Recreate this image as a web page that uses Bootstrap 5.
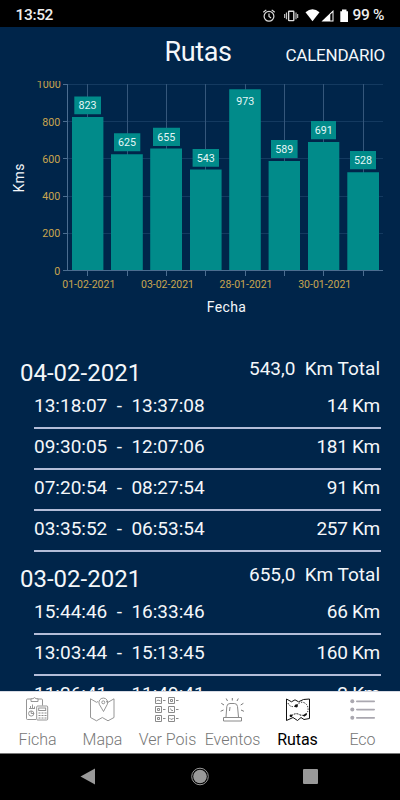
<!DOCTYPE html>
<html lang="es">
<head>
<meta charset="utf-8">
<meta name="viewport" content="width=device-width, initial-scale=1">
<title>Rutas</title>
<link href="https://cdn.jsdelivr.net/npm/bootstrap@5.3.0/dist/css/bootstrap.min.css" rel="stylesheet">
<style>
body { font-family: Roboto, "Liberation Sans", sans-serif; background: #00254a; color: #f4f7fa; }
svg { display: block; flex: none; }
.status { height: 27px; padding: 4px 16px 0 15.5px; font-size: 15.5px; font-weight: 500; letter-spacing: -.35px; background: #000; color: #eee; }
.titlebar { height: 54px; display: grid; grid-template-columns: 1fr auto 1fr; padding: 0 15px 0 11px; }
.titlebar h1 { font-size: 27px; font-weight: 400; line-height: 30px; margin-top: 10px; letter-spacing: -.4px; }
.cal { font-size: 17px; line-height: 22px; margin-top: 17px; letter-spacing: -.25px; }
.chart { height: 265px; }
.day-head { height: 42px; padding: 0 20px; }
.day-date { font-size: 24px; line-height: 28px; padding-top: 13px; }
.day-total { font-size: 19px; line-height: 22px; padding-top: 12px; white-space: pre; }
.trip { height: 41px; margin: 0 19px 0 34px; padding: 7px 1px 0 0; border-bottom: 2px solid #b3bdd8; font-size: 19px; line-height: 22px; white-space: pre; }
.trip span:last-child { letter-spacing: -.25px; }
.tabs { height: 63px; padding: 0 5px; background: #fff; border-top: 1px solid #d8dbe4; border-bottom: 1px solid #777; }
.tab { width: 65px; padding-top: 3px; font-size: 16px; font-weight: 300; line-height: 20px; color: #777; white-space: nowrap; }
.tab svg { margin: 0 1px 5px 0; }
.tab.current { color: #000; font-weight: 400; letter-spacing: -.1px; }
.sysnav { height: 46px; background: #000; }
</style>
<script src="https://cdn.jsdelivr.net/npm/bootstrap@5.3.0/dist/js/bootstrap.bundle.min.js"></script>
</head>
<body>
<div class="d-flex flex-column vh-100 overflow-hidden">
  <header class="flex-shrink-0">
    <div class="status d-flex justify-content-between align-items-center">
      <span>13:52</span>
      <div class="d-flex align-items-center">
        <svg width="90" height="20" viewBox="257 4 90 20" fill="none" stroke="#ddd" stroke-width="1.2">
          <circle cx="267" cy="14.3" r="4.9"/><path d="M267 11.4v3.1l2.1 1.400M261.3 10.3l3-2.4M272.7 10.3l-3-2.4"/>
          <rect x="286.6" y="9.3" width="5.2" height="9.3" rx=".5" stroke-width="1.4"/><path d="M284.4 10.5v6.8M294 10.5v6.8M282.7 12v4M295.700 12v4" stroke-width="1"/>
          <path d="M303.500 10.200Q310.500 4.500 317.500 10.200L310.500 19.200Z" fill="#fff" stroke="none"/>
          <path d="M319.500 19.500L331.500 8V19.500Z" fill="#fff" stroke="none"/><path d="M328.300 12.500L330.500 10.400V18.500H328.300Z" fill="#000" stroke="none"/>
          <path d="M338.300 9.200H340V7.500H344.500V9.200H346V20H338.300Z" fill="#fff" stroke="none"/>
        </svg>
        <span class="ps-1">99 %</span>
      </div>
    </div>
    <div class="titlebar">
      <span></span>
      <h1 class="mb-0">Rutas</h1>
      <span class="cal text-end">CALENDARIO</span>
    </div>
  </header>

  <main class="flex-grow-1 overflow-hidden">
    <div class="chart">
      <svg width="400" height="265" viewBox="0 81 400 265" font-family="Roboto, sans-serif">
        <g stroke="#143a60" stroke-width="1">
          <path d="M68 84.500H383M68 121.500H383M68 158.500H383M68 196.500H383M68 233.500H383"/>
          <path stroke="#35577b" d="M87.500 84V270M127.500 84V270M166.500 84V270M205.500 84V270M245.500 84V270M284.500 84V270M323.500 84V270M363.500 84V270"/>
        </g>
        <path fill="#018b8a" d="M72 117H103.400V270.500H72ZM111 154.300H142.800V270.500H111ZM150.200 148.600H182V270.500H150.200ZM190 169.500H221.600V270.500H190ZM229.200 89.300H260.800V270.500H229.200ZM268.600 161H300V270.500H268.600ZM308 142H339.300V270.500H308ZM347.300 172.200H379V270.500H347.300Z"/>
        <path stroke="#4b6d90" fill="none" d="M67.500 84V270.500M63 84.500H68M63 121.500H68M63 158.500H68M63 196.500H68M63 233.500H68M63 270.500H383M87.500 271V276M127.500 271V276M166.500 271V276M205.500 271V276M245.500 271V276M284.500 271V276M323.500 271V276M363.500 271V276"/>
        <path fill="#018b8a" d="M74.300 96.600H101V114.300H74.300ZM114 133.300H140.300V151.300H114ZM153 127.700H180V146H153ZM192.600 149H219V166.700H192.600ZM271 140H297.600V158H271ZM311 121H336V139.200H311ZM350 151H376V169.300H350Z"/>
        <g fill="#e4f6f6" font-size="10.700" text-anchor="middle">
          <text x="87.500" y="109.300">823</text><text x="127" y="146.300">625</text><text x="166.300" y="140.800">655</text><text x="205.800" y="161.800">543</text><text x="245.200" y="105.300">973</text><text x="284.300" y="153">589</text><text x="323.700" y="134.200">691</text><text x="363" y="164.300">528</text>
        </g>
        <g fill="#c9a54f" font-size="10.700" text-anchor="end">
          <text x="60.700" y="88.300">1000</text><text x="60.200" y="125.700">800</text><text x="60.200" y="163">600</text><text x="60.200" y="200.200">400</text><text x="60.200" y="237.400">200</text><text x="60.200" y="274.700">0</text>
        </g>
        <g fill="#c9a54f" font-size="10.500" text-anchor="middle">
          <text x="88.800" y="287.800">01-02-2021</text><text x="167.500" y="287.800">03-02-2021</text><text x="246" y="287.800">28-01-2021</text><text x="324.700" y="287.800">30-01-2021</text>
        </g>
        <g fill="#f4f7fa" font-size="14" text-anchor="middle">
          <text x="226.300" y="312" textLength="39">Fecha</text>
          <text transform="translate(24 178) rotate(-90)" textLength="29">Kms</text>
        </g>
      </svg>
    </div>

    <section>
      <div class="day-head d-flex justify-content-between">
        <span class="day-date">04-02-2021</span><span class="day-total">543,0  Km Total</span>
      </div>
      <div class="trip d-flex justify-content-between"><span>13:18:07  -  13:37:08</span><span>14 Km</span></div>
      <div class="trip d-flex justify-content-between"><span>09:30:05  -  12:07:06</span><span>181 Km</span></div>
      <div class="trip d-flex justify-content-between"><span>07:20:54  -  08:27:54</span><span>91 Km</span></div>
      <div class="trip d-flex justify-content-between"><span>03:35:52  -  06:53:54</span><span>257 Km</span></div>
    </section>
    <section>
      <div class="day-head d-flex justify-content-between">
        <span class="day-date">03-02-2021</span><span class="day-total">655,0  Km Total</span>
      </div>
      <div class="trip d-flex justify-content-between"><span>15:44:46  -  16:33:46</span><span>66 Km</span></div>
      <div class="trip d-flex justify-content-between"><span>13:03:44  -  15:13:45</span><span>160 Km</span></div>
      <div class="trip d-flex justify-content-between"><span>11:26:41  -  11:49:41</span><span>2 Km</span></div>
    </section>
  </main>

  <nav class="tabs d-flex flex-shrink-0">
    <div class="tab d-flex flex-column align-items-center">
      <svg width="28" height="30" viewBox="23 695 28 30" fill="none" stroke="#8a8a8a" stroke-width=".9">
        <path d="M31 699H27.500Q26.500 699 26.500 700V718.500Q26.500 719.500 27.500 719.500H36M38 699H41.500Q42.500 699 42.500 700V705.500"/>
        <path d="M31 701.500V698.700H33Q34.500 696.500 36 698.700H38V701.500Z"/>
        <path d="M29 708.500H35M30.500 708V706M32.500 708V704.500M34.500 708V706.500"/><circle cx="31.200" cy="713.500" r="2.600"/><path d="M31.200 713.500V711M31.200 713.500H34"/>
        <rect x="36.700" y="706" width="11" height="14" rx="1"/><rect x="38.700" y="708" width="7" height="2.500"/>
        <path d="M38.500 713H40.500M41.500 713H43.500M44.500 713H46.500M38.500 715.500H40.500M41.500 715.500H43.500M44.500 715.500H46.500M38.500 718H40.500M41.500 718H43.500M44.500 718H46.500" stroke-width="1.200"/>
      </svg><span>Ficha</span>
    </div>
    <div class="tab d-flex flex-column align-items-center">
      <svg width="28" height="30" viewBox="88 695 28 30" fill="none" stroke="#8a8a8a" stroke-width=".9">
        <path d="M98 701.500L96.500 702.300L90.500 698.800V717.500L96.500 720.800L102.300 717.500L108 720.800L114 717.500V698.800L108 702.300L106 701.500"/>
        <path d="M103.500 711.500L99.300 704.300A4.400 4.400 0 1 1 107.300 704.300Z"/><circle cx="103.300" cy="702.300" r="1.500"/>
      </svg><span>Mapa</span>
    </div>
    <div class="tab d-flex flex-column align-items-center">
      <svg width="28" height="30" viewBox="153 695 28 30" fill="none" stroke="#8a8a8a" stroke-width="1">
        <path d="M155.500 697.500H161.500V703.500H155.500ZM168.500 697.500H174.500V703.500H168.500ZM155.500 706.500H161.500V712.500H155.500ZM168.500 706.500H174.500V712.500H168.500ZM155.500 715.500H161.500V721.500H155.500ZM168.500 715.500H174.500V721.500H168.500Z"/>
        <path stroke-width="1.100" d="M163 700.500H165.500M176 700.500H178.500M163 709.500H165.500M176 709.500H178.500M163 718.500H165.500M176 718.500H178.500"/>
        <path d="M156.500 701L158 700L160.500 701M170.500 699.500H172.500V701.500H170.500ZM157.500 708.500H159.500V710.500H157.500ZM170.500 708.500L171.500 710.500H173M157.500 717.500H159.500V719.500H157.500ZM169.500 718L171 719.500L173.500 718.500"/>
      </svg><span>Ver Pois</span>
    </div>
    <div class="tab d-flex flex-column align-items-center">
      <svg width="28" height="30" viewBox="218 695 28 30" fill="none" stroke="#8a8a8a" stroke-width="1">
        <path d="M226 717L226.800 706.500Q227.100 703.500 230 703.500H234.300Q237.200 703.500 237.500 706.500L238.500 717"/><path d="M223.500 717.500H241.500V721H223.500Z"/><path d="M229.500 711L230 707"/>
        <path stroke="#777" d="M232.300 700.500V698M227.500 701L226.200 698.500M237 701L238.300 698.500M224 705L221.300 703.300M240.700 705L243.400 703.300M223.500 710L220.600 711.300M241 710L243.900 711.300"/>
      </svg><span>Eventos</span>
    </div>
    <div class="tab current d-flex flex-column align-items-center">
      <svg width="28" height="30" viewBox="283 695 28 30" fill="none" stroke="#111" stroke-width="1">
        <path d="M286.500 699L291.500 701.800L295 699.800L298.500 701.800L303.500 699.500L309.500 699V718.500L304 719.500L301 717.500L297.500 720.500L293 717.500L286.500 720.500Z"/>
        <path d="M288 703Q290 708 296 706Q302 699 307 705Q310 711 305 715" stroke-dasharray="1.300 1.300"/><path d="M291 716Q296 712 300 715L304 715.500" stroke-dasharray="2 1"/>
        <circle cx="296.300" cy="705.800" r="1.600" fill="#111" stroke="none"/><circle cx="291" cy="715.800" r="1.400" fill="#111" stroke="none"/><path d="M303.500 716L306.500 714" stroke-width="2"/>
      </svg><span>Rutas</span>
    </div>
    <div class="tab d-flex flex-column align-items-center">
      <svg width="28" height="30" viewBox="348 695 28 30" fill="#aaa8b0">
        <circle cx="352.300" cy="701.300" r="2"/><circle cx="352.300" cy="709.500" r="2"/><circle cx="352.300" cy="717.800" r="2"/>
        <rect x="356" y="700.500" width="19" height="1.700" rx=".8"/><rect x="356" y="708.700" width="19" height="1.700" rx=".8"/><rect x="356" y="717" width="19" height="1.700" rx=".8"/>
      </svg><span>Eco</span>
    </div>
  </nav>
  <footer class="sysnav flex-shrink-0">
    <svg width="400" height="46" viewBox="0 754 400 46" fill="#999">
      <path d="M80.500 776.500L95 768.500V784.500Z"/>
      <circle cx="200" cy="776.500" r="6.800"/><circle cx="200" cy="776.500" r="8.300" fill="none" stroke="#999" stroke-width="1"/>
      <rect x="303" y="769" width="15" height="15" rx="1"/>
    </svg>
  </footer>
</div>
</body>
</html>
